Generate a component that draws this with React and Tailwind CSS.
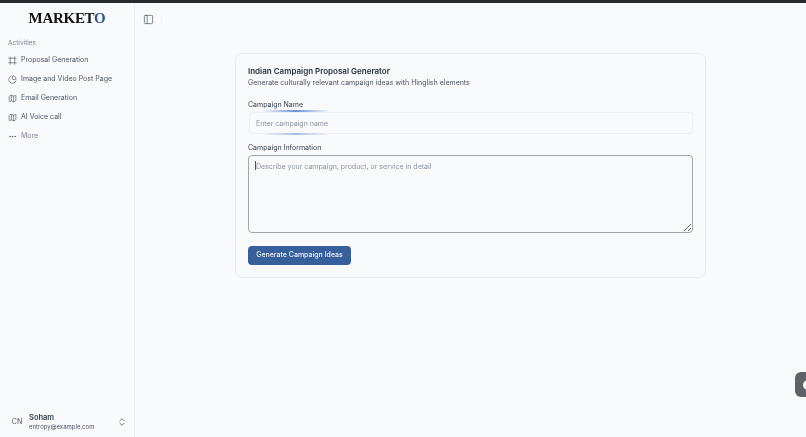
import React from "react";
import { Frame, PieChart, Map, MoreHorizontal, PanelLeft, ChevronsUpDown } from "lucide-react";

const navItems = [
  { label: "Proposal Generation", icon: Frame },
  { label: "Image and Video Post Page", icon: PieChart },
  { label: "Email Generation", icon: Map },
  { label: "AI Voice call", icon: Map },
];

const App = () => {
  return (
    <div className="h-[437px] w-[806px] overflow-hidden relative bg-[#f9fafc] font-['Inter',sans-serif] antialiased text-[#1f2937]">
      <div className="h-[3px] bg-[#2a2a2c]" />
      <div className="flex h-[434px]">
        {/* Sidebar */}
        <aside className="w-[135px] shrink-0 border-r border-[#eef0f3] flex flex-col will-change-transform">
          <div className="h-[28px] pt-[5px] flex justify-center">
            <span className="font-['Liberation_Serif',serif] font-bold text-[15px] leading-[20px] tracking-[-0.3px] text-[#111]">
              MARKET<span className="text-[#2f5597]">O</span>
            </span>
          </div>
          <div className="px-[8px] mt-[7px] text-[6.5px] leading-[10px] text-[#7b8494]">Activities</div>
          <nav className="mt-[3px] flex flex-col">
            {navItems.map((item, i) => {
              const Icon = item.icon;
              return (
                <div key={i} className="h-[19px] pl-[8px] flex items-center gap-[4px] text-[7px] text-[#4b5563]">
                  <Icon size={9} strokeWidth={1.7} className="text-[#4b5563]" />
                  <span>{item.label}</span>
                </div>
              );
            })}
            <div className="h-[19px] pl-[8px] flex items-center gap-[4px] text-[7px] text-[#7b8494]">
              <MoreHorizontal size={9} strokeWidth={1.7} className="text-[#4b5563]" />
              <span>More</span>
            </div>
          </nav>
          <div className="mt-auto h-[28px] mb-[1px] pl-[10px] pr-[7px] flex items-center">
            <div className="w-[14px] text-[7px] text-[#4b5563] text-center">CN</div>
            <div className="ml-[5px] flex-1 leading-none">
              <div className="text-[7.5px] leading-[10px] font-semibold text-[#374151]">Soham</div>
              <div className="text-[6px] leading-[8px] text-[#4b5563]">entropy@example.com</div>
            </div>
            <ChevronsUpDown size={10} strokeWidth={1.6} className="text-[#374151]" />
          </div>
        </aside>

        {/* Main */}
        <main className="flex-1 min-w-0">
          <div className="h-[33px] pl-[8px] flex items-center gap-[7px]">
            <PanelLeft size={11} strokeWidth={1.5} className="text-[#4b5563]" />
            <div className="h-[9px] w-px bg-[#f1f3f5]" />
          </div>
          <div className="flex justify-center pt-[17px]">
            <section className="w-[471px] h-[225px] border border-[#e9ebef] rounded-[7px] px-[12px] pt-[11px] flex flex-col will-change-transform">
              <h2 className="text-[8px] leading-[12px] font-semibold text-[#1f2937]">Indian Campaign Proposal Generator</h2>
              <p className="text-[7px] leading-[11px] text-[#4b5563]">
                Generate culturally relevant campaign ideas with Hinglish elements
              </p>
              <label className="mt-[11px] text-[7px] leading-[11px] text-[#374151]">Campaign Name</label>
              <div className="relative mt-[2px] ml-px">
                <input
                  type="text"
                  placeholder="Enter campaign name"
                  className="block w-full h-[22px] border border-[#eef0f3] rounded-[3px] bg-transparent px-[6px] text-[7px] placeholder:text-[#8b93a1] outline-none"
                />
                <div className="absolute left-[13px] -top-[2px] h-[2px] w-[68px] bg-gradient-to-r from-transparent via-[#6f94d6] to-transparent" />
                <div className="absolute left-[13px] -bottom-[1px] h-[2px] w-[68px] bg-gradient-to-r from-transparent via-[#a9bfe6] to-transparent" />
              </div>
              <label className="mt-[8px] text-[7px] leading-[11px] text-[#374151]">Campaign Information</label>
              <div className="relative mt-[2px]">
                <textarea
                  placeholder="Describe your campaign, product, or service in detail"
                  className="block w-full h-[78px] border-[1.5px] border-[#a3a5a9] rounded-[4px] bg-transparent px-[7px] py-[6px] text-[7px] placeholder:text-[#8b93a1] outline-none"
                />
                <div className="absolute left-[7px] top-[6px] h-[9px] w-px bg-[#555]" />
              </div>
              <button className="mt-[13px] self-start h-[19px] w-[103px] rounded-[4px] bg-[#365f9c] text-[7px] font-medium text-[#eef3fb] whitespace-nowrap">
                Generate Campaign Ideas
              </button>
            </section>
          </div>
        </main>
      </div>

      {/* Floating widget cut off by the window edge */}
      <div className="absolute right-0 top-[372px] h-[25px] w-[11px] rounded-l-[6px] bg-[#5f6368] flex items-center">
        <div className="ml-[8px] h-[10px] w-[10px] shrink-0 rounded-full bg-white" />
      </div>
    </div>
  );
};

export default App;
